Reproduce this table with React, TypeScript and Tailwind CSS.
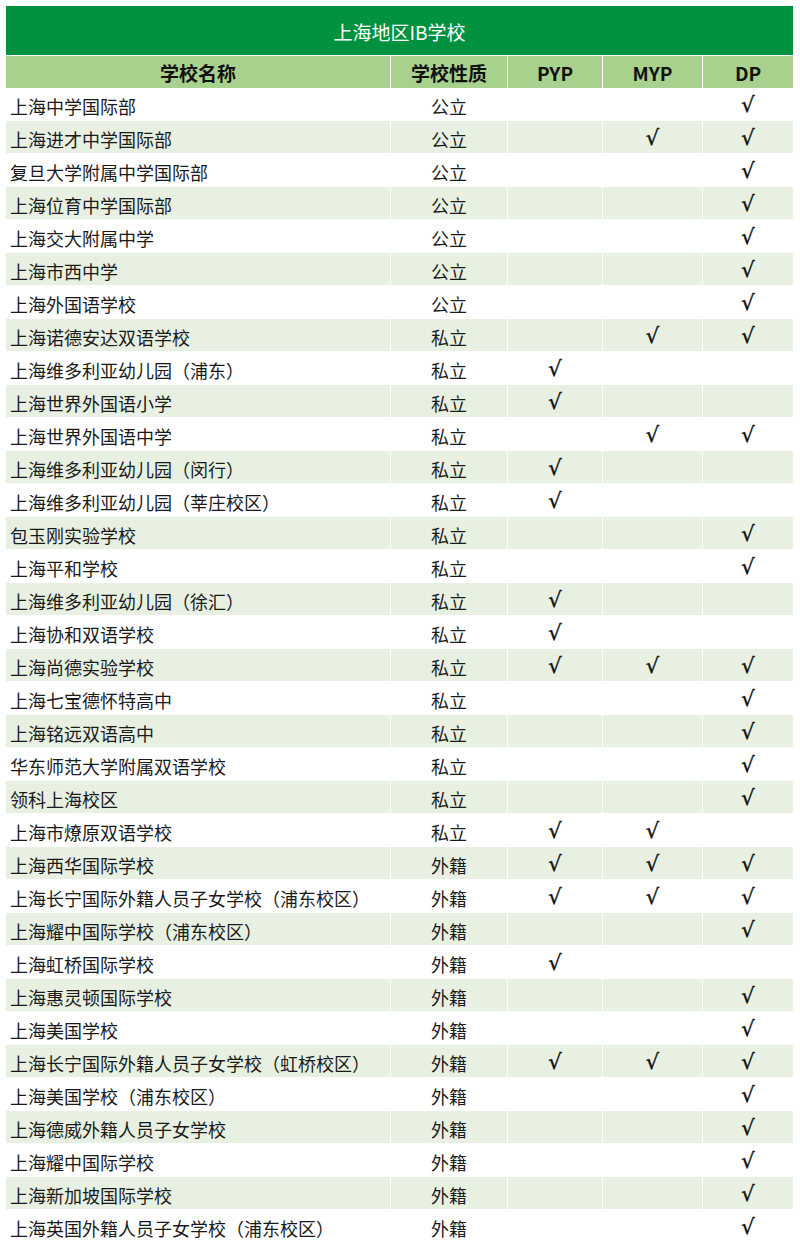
import React from "react";

type Row = [string, string, boolean, boolean, boolean];

const rows: Row[] = [
  ["上海中学国际部", "公立", false, false, true],
  ["上海进才中学国际部", "公立", false, true, true],
  ["复旦大学附属中学国际部", "公立", false, false, true],
  ["上海位育中学国际部", "公立", false, false, true],
  ["上海交大附属中学", "公立", false, false, true],
  ["上海市西中学", "公立", false, false, true],
  ["上海外国语学校", "公立", false, false, true],
  ["上海诺德安达双语学校", "私立", false, true, true],
  ["上海维多利亚幼儿园（浦东）", "私立", true, false, false],
  ["上海世界外国语小学", "私立", true, false, false],
  ["上海世界外国语中学", "私立", false, true, true],
  ["上海维多利亚幼儿园（闵行）", "私立", true, false, false],
  ["上海维多利亚幼儿园（莘庄校区）", "私立", true, false, false],
  ["包玉刚实验学校", "私立", false, false, true],
  ["上海平和学校", "私立", false, false, true],
  ["上海维多利亚幼儿园（徐汇）", "私立", true, false, false],
  ["上海协和双语学校", "私立", true, false, false],
  ["上海尚德实验学校", "私立", true, true, true],
  ["上海七宝德怀特高中", "私立", false, false, true],
  ["上海铭远双语高中", "私立", false, false, true],
  ["华东师范大学附属双语学校", "私立", false, false, true],
  ["领科上海校区", "私立", false, false, true],
  ["上海市燎原双语学校", "私立", true, true, false],
  ["上海西华国际学校", "外籍", true, true, true],
  ["上海长宁国际外籍人员子女学校（浦东校区）", "外籍", true, true, true],
  ["上海耀中国际学校（浦东校区）", "外籍", false, false, true],
  ["上海虹桥国际学校", "外籍", true, false, false],
  ["上海惠灵顿国际学校", "外籍", false, false, true],
  ["上海美国学校", "外籍", false, false, true],
  ["上海长宁国际外籍人员子女学校（虹桥校区）", "外籍", true, true, true],
  ["上海美国学校（浦东校区）", "外籍", false, false, true],
  ["上海德威外籍人员子女学校", "外籍", false, false, true],
  ["上海耀中国际学校", "外籍", false, false, true],
  ["上海新加坡国际学校", "外籍", false, false, true],
  ["上海英国外籍人员子女学校（浦东校区）", "外籍", false, false, true],
];

const font = {
  fontFamily: '"Noto Sans CJK SC", "Noto Sans", sans-serif',
};

function Check({ on }: { on: boolean }) {
  return (
    <span
      className="pt-[2px] text-[21px] leading-none italic text-[#111]"
      style={{ fontFamily: '"DejaVu Sans", sans-serif', WebkitTextStroke: "0.4px #111" }}
    >
      {on ? "√" : ""}
    </span>
  );
}

export default function App() {
  return (
    <div className="min-h-[1246px] w-[800px] bg-white pt-[6px] pl-[6px]" style={font}>
      <div className="flex w-[787px] flex-col gap-px bg-white">
        <div className="flex h-[49px] items-center justify-center bg-[#01913f] pt-[3px] text-[19px] text-white">
          上海地区IB学校
        </div>
        <div className="grid h-[31px] grid-cols-[384px_116px_94px_99px_90px] gap-x-px text-[19px] font-bold text-[#111]">
          <div className="flex items-center justify-center bg-[#a9d18e] pt-[3px]">学校名称</div>
          <div className="flex items-center justify-center bg-[#a9d18e] pt-[3px]">学校性质</div>
          <div className="flex items-center justify-center bg-[#a9d18e] pt-[3px]">PYP</div>
          <div className="flex items-center justify-center bg-[#a9d18e] pt-[3px]">MYP</div>
          <div className="flex items-center justify-center bg-[#a9d18e] pt-[3px]">DP</div>
        </div>
        {rows.map((r, i) => {
          const bg = i % 2 === 1 ? "bg-[#e8f0e2]" : "bg-white";
          return (
            <div
              key={i}
              className="grid h-[32px] grid-cols-[384px_116px_94px_99px_90px] gap-x-px text-[18px] text-[#1a1a1a]"
            >
              <div className={`flex items-center pl-[4px] pt-[4px] ${bg}`}>{r[0]}</div>
              <div className={`flex items-center justify-center pt-[4px] ${bg}`}>{r[1]}</div>
              <div className={`flex items-center justify-center ${bg}`}>
                <Check on={r[2]} />
              </div>
              <div className={`flex items-center justify-center ${bg}`}>
                <Check on={r[3]} />
              </div>
              <div className={`flex items-center justify-center ${bg}`}>
                <Check on={r[4]} />
              </div>
            </div>
          );
        })}
      </div>
    </div>
  );
}
